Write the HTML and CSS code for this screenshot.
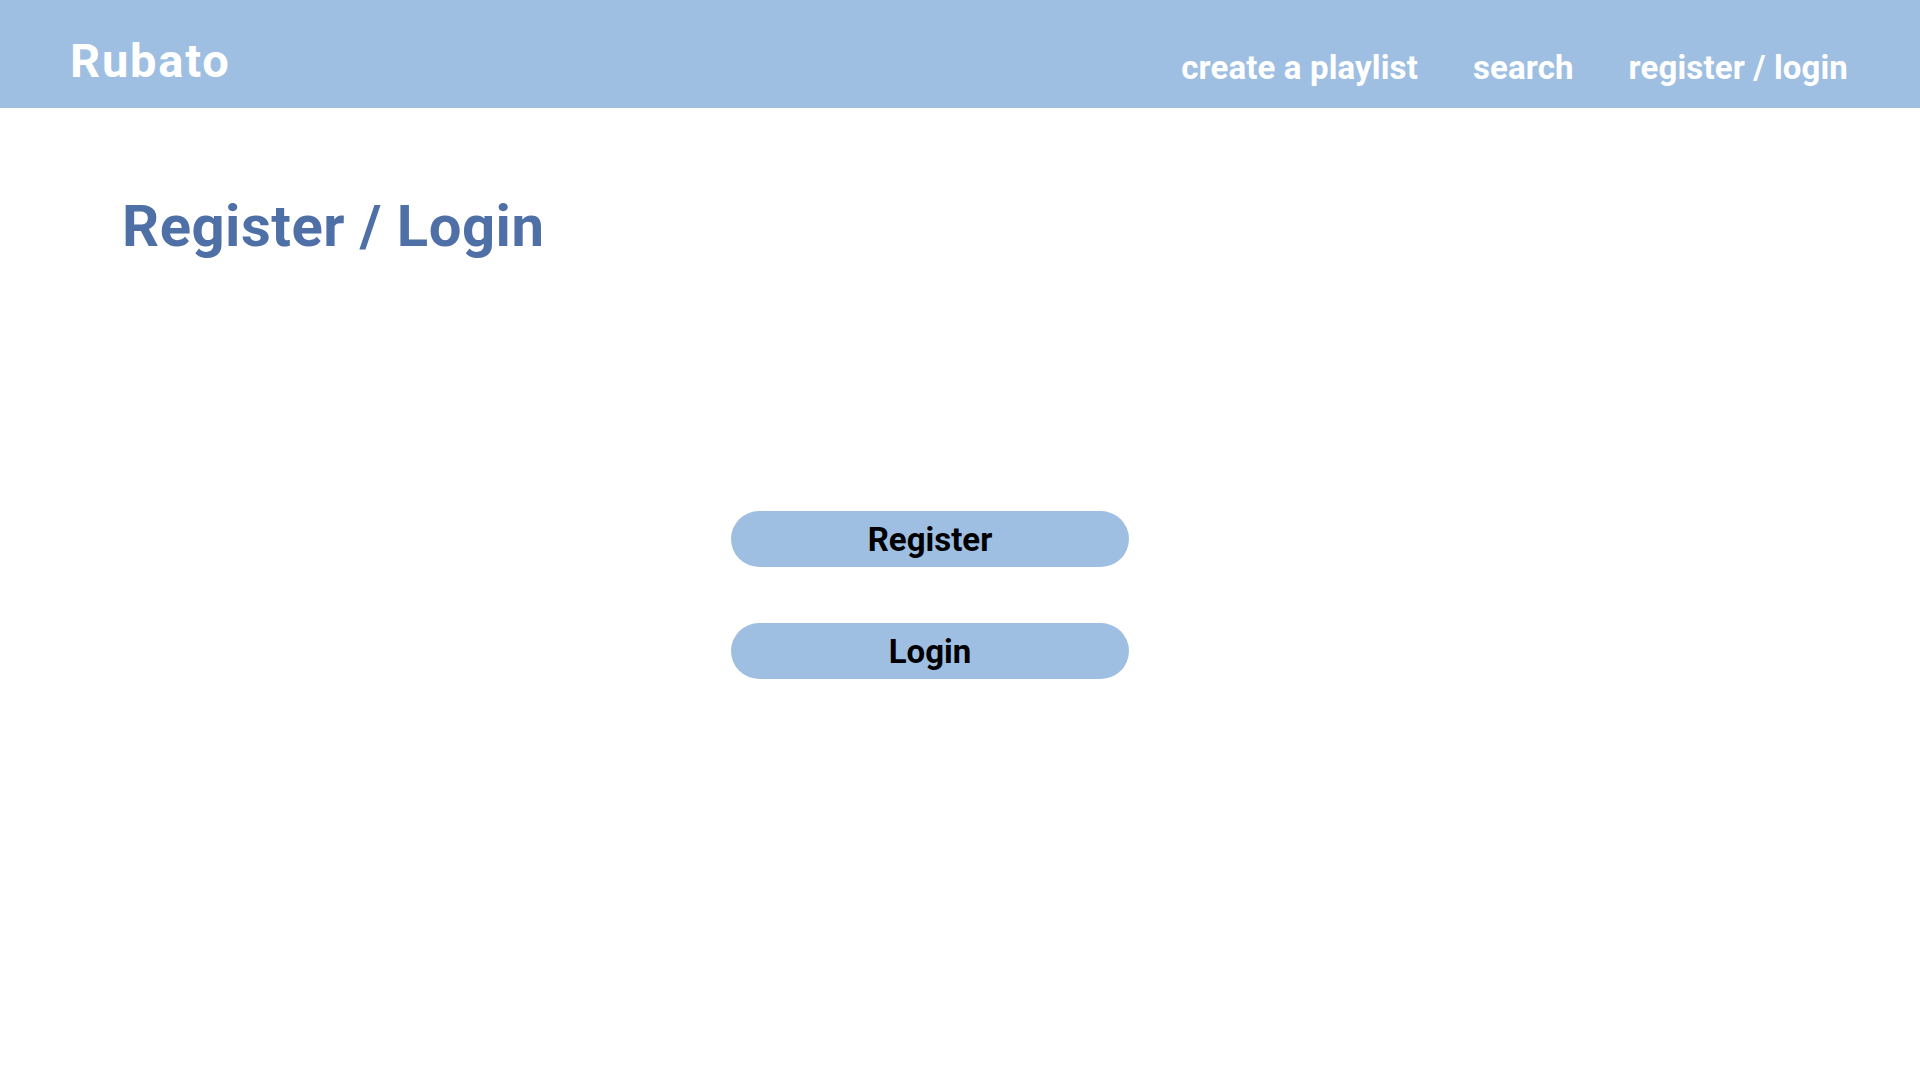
FILE: index.html
```html
<!DOCTYPE html>
<html lang="en">
<head>
<meta charset="utf-8">
<title>Rubato - Register / Login</title>
<link rel="stylesheet" href="styles.css">
</head>
<body>
<header class="topbar">
  <div class="brand">Rubato</div>
  <nav class="nav">
    <a class="nav-link" href="#">create a playlist</a>
    <a class="nav-link" href="#">search</a>
    <a class="nav-link" href="#">register / login</a>
  </nav>
</header>
<main class="content">
  <h1 class="page-title">Register / Login</h1>
  <div class="actions">
    <button class="pill-btn" type="button">Register</button>
    <button class="pill-btn" type="button">Login</button>
  </div>
</main>
</body>
</html>
```
FILE: styles.css
```css
html, body {
  margin: 0;
  padding: 0;
  background: #ffffff;
  font-family: Roboto, "Liberation Sans", sans-serif;
}

.topbar {
  height: 108px;
  background: #9ebfe2;
  display: flex;
  justify-content: space-between;
  align-items: flex-start;
  padding: 0 72px 0 70px;
  box-sizing: border-box;
}

.brand {
  margin-top: 37px;
  font-size: 47px;
  line-height: 1;
  font-weight: 700;
  color: #ffffff;
  letter-spacing: 1.8px;
}

.nav {
  margin-top: 51px;
  display: flex;
  gap: 55px;
}

.nav-link {
  font-size: 33px;
  line-height: 1;
  font-weight: 700;
  color: #ffffff;
  text-decoration: none;
  letter-spacing: 0.13px;
}

.content {
  padding: 89px 0 0 122px;
}

.page-title {
  margin: 0;
  font-size: 58px;
  line-height: 1;
  font-weight: 700;
  color: #4f70a7;
  letter-spacing: 0.5px;
}

.actions {
  margin-top: 256px;
  margin-left: -122px;
  padding-right: 60px;
  display: flex;
  flex-direction: column;
  align-items: center;
  gap: 56px;
}

.pill-btn {
  width: 398px;
  height: 56px;
  border: none;
  border-radius: 28px;
  background: #9ebfe2;
  color: #000000;
  font-family: Roboto, "Liberation Sans", sans-serif;
  font-size: 33px;
  font-weight: 700;
  line-height: 1;
  padding: 0;
  cursor: pointer;
}
```
